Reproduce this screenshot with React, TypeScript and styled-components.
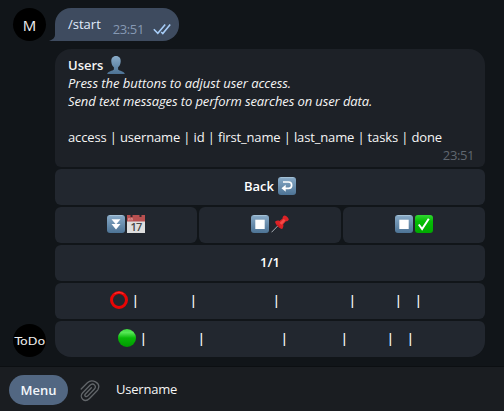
import React from "react";
import styled, { createGlobalStyle } from "styled-components";

const Global = createGlobalStyle`
  * { box-sizing: border-box; }
  body { margin: 0; background: #101417; overflow: hidden; }
`;

const Page = styled.div`
  width: 504px;
  height: 411px;
  display: flex;
  flex-direction: column;
  background: #111519;
  color: #f5f5f5;
  font: 13px/18px "Open Sans", "Noto Sans", sans-serif;
`;

const Chat = styled.main`
  height: 366px;
  padding: 8px 19px 9px 13px;
  display: flex;
  flex-direction: column;
  gap: 8px;
`;

const MessageRow = styled.div`
  display: flex;
  align-items: flex-end;
`;

const Avatar = styled.div`
  width: 33px;
  height: 33px;
  flex: none;
  display: flex;
  align-items: center;
  justify-content: center;
  border-radius: 50%;
  background: #000;
  color: #eee;
  font-size: 15px;
  font-weight: 500;
`;

const Brand = styled.span`
  font: 400 10.5px/18px "DejaVu Sans", sans-serif;
  white-space: nowrap;
  transform: scaleX(1.2);
`;

const Tail = styled.svg`
  width: 10px;
  height: 12px;
  flex: none;
  margin: 0 -7px 0 3px;
`;

const Sent = styled.div`
  width: 124px;
  height: 33px;
  display: flex;
  align-items: flex-start;
  padding: 7px 8px 0 13px;
  margin-left: 3px;
  border-radius: 16px 16px 16px 0;
  background: #3e4b5f;
  color: #e1edfd;
`;

const SentTime = styled.span`
  margin: 5px 0 0 12px;
  width: 31px;
  letter-spacing: -0.4px;
  color: #8699b3;
`;

const Ticks = styled.svg`
  width: 18px;
  height: 12px;
  margin: 8px 0 0 9px;
`;

const Message = styled.section`
  width: 430px;
  margin-left: 9px;
  display: flex;
  flex-direction: column;
  gap: 2px;
`;

const Card = styled.div`
  height: 118px;
  padding: 7px 11px 0 13px;
  border-radius: 16px 16px 6px 6px;
  background: #1d2127;
`;

const Line = styled.div<{ $italic?: boolean; $tracking?: number }>`
  height: 18px;
  display: flex;
  align-items: center;
  white-space: pre;
  font-style: ${(p) => (p.$italic ? "italic" : "normal")};
  letter-spacing: ${(p) => p.$tracking ?? 0}px;
`;

const Strong = styled.strong`
  font-weight: 600;
`;

const CardTime = styled.div`
  text-align: right;
  letter-spacing: -0.4px;
  color: #60676f;
`;

const ButtonRow = styled.div`
  display: grid;
  grid-auto-flow: column;
  grid-auto-columns: 1fr;
  gap: 2px;
`;

const Key = styled.button<{ $last?: boolean; $inset?: number }>`
  height: 36px;
  border: 0;
  padding: 0 0 2px ${(p) => p.$inset ?? 0}px;
  display: flex;
  align-items: center;
  justify-content: ${(p) => (p.$inset ? "flex-start" : "center")};
  border-radius: ${(p) => (p.$last ? "6px 6px 16px 16px" : "6px")};
  background: #22272f;
  color: #fff;
  font: 600 13px/18px "Open Sans", sans-serif;
`;

const Bar = styled.span<{ $w: number }>`
  width: ${(p) => p.$w}px;
  text-align: right;
  font-weight: 600;
`;

const Emoji = styled.svg<{ $gap?: number }>`
  width: 18px;
  height: 18px;
  flex: none;
  margin-left: ${(p) => p.$gap ?? 0}px;
`;

const Footer = styled.footer`
  height: 45px;
  display: flex;
  align-items: center;
  padding: 2px 9px 0;
  border-top: 1px solid #0c0f12;
  background: #1a1d21;
`;

const MenuButton = styled.button`
  width: 59px;
  height: 30px;
  border: 0;
  padding: 0;
  border-radius: 15px;
  background: #526782;
  color: #f4f7fb;
  font: 600 13px/18px "Open Sans", sans-serif;
`;

const Clip = styled.svg`
  width: 20px;
  height: 22px;
  margin: 1px 0 0 12px;
`;

const Draft = styled.span`
  margin: -2px 0 0 16px;
  letter-spacing: -0.2px;
`;

const Gradients = () => (
  <defs>
    <linearGradient id="blue" x2="0" y2="1">
      <stop stopColor="#89abc8" />
      <stop offset="1" stopColor="#4d7395" />
    </linearGradient>
    <linearGradient id="green" x2="0" y2="1">
      <stop stopColor="#32d832" />
      <stop offset=".35" stopColor="#05bd05" />
      <stop offset="1" stopColor="#00a900" />
    </linearGradient>
    <linearGradient id="ball" x2="0" y2="1">
      <stop stopColor="#3fdc3f" />
      <stop offset=".2" stopColor="#55e855" />
      <stop offset=".5" stopColor="#08b808" />
      <stop offset="1" stopColor="#009a00" />
    </linearGradient>
  </defs>
);

const BlueTile = ({ children, gap }: { children: React.ReactNode; gap?: number }) => (
  <Emoji viewBox="0 0 18 18" $gap={gap}>
    <Gradients />
    <rect width="18" height="18" rx="3" fill="url(#blue)" />
    <path d="M2.5.6h13" stroke="#b0c9dc" strokeWidth=".8" />
    {children}
  </Emoji>
);

const Person = () => (
  <Emoji viewBox="0 0 18 18" $gap={4}>
    <Gradients />
    <path
      d="M9 0C5.8 0 4.1 2.3 4.3 5.5c.1 2.7 1.1 4.6 2.6 5.7v2.3C5.8 15 .7 15 .2 18h17.6c-.5-3-5.6-3-6.7-4.5v-2.3c1.5-1.1 2.5-3 2.6-5.7C13.9 2.3 12.2 0 9 0z"
      fill="url(#blue)"
    />
  </Emoji>
);

const StopTile = () => (
  <BlueTile>
    <rect x="4.3" y="4.7" width="9.4" height="9.3" fill="#fff" />
  </BlueTile>
);

const Calendar = () => (
  <Emoji viewBox="0 0 18 18" $gap={2}>
    <path d="M0 0h18v18H0z" fill="#dedede" />
    <path d="M0 0h18v6.5H0z" fill="#b85050" />
    <path d="M3.5 0h2v2h-2zM12.5 0h2v2h-2z" fill="#33272c" />
    <path d="M1.5 5.5V3.4h1.3v2M4 5.5V3.4h1.3v2" stroke="#d7908f" fill="none" />
    <text x="9" y="16" textAnchor="middle" fontFamily="Open Sans" fontSize="11" fontWeight="600" letterSpacing="-.8" fill="#484848">17</text>
  </Emoji>
);

const Pin = () => (
  <Emoji viewBox="0 0 18 18" $gap={2}>
    <path d="M.5 17.3 7 10.7" stroke="#a7adb4" strokeWidth="1" />
    <path d="M4 6.7c1.5-1.2 3.2-1.3 4.5-.8l3.1-2.5C11.4 1.7 12.4.6 13.7.4c2.1.6 3.5 2 4.1 4-.4 1.3-1.5 2-2.9 1.8L12.2 9.3c.5 1.7.1 3.3-1 4.7C8 13.2 5 10.3 4 6.7z" fill="#dd2226" />
    <path d="m8.5 8 4.2-4.1 1.8 1.5-3.7 4.4z" fill="#f44b47" />
    <path d="m6 9.5 2.5 2.7" stroke="#a8141c" />
  </Emoji>
);

const Check = () => (
  <Emoji viewBox="0 0 18 18" $gap={2}>
    <Gradients />
    <rect width="18" height="18" rx="3" fill="url(#green)" />
    <path d="m3.8 9.5 3.3 4.5 6.7-10.3" fill="none" stroke="#fff" strokeWidth="2" />
  </Emoji>
);

const RedRing = () => (
  <Emoji viewBox="0 0 18 18">
    <circle cx="9" cy="9" r="7.5" fill="none" stroke="#e80505" strokeWidth="3" />
    <path d="M4.5 2.8a8 8 0 0 1 9 0" fill="none" stroke="#fa2e2e" strokeWidth="1.2" />
  </Emoji>
);

const GreenDot = () => (
  <Emoji viewBox="0 0 18 18">
    <Gradients />
    <circle cx="9" cy="9" r="9" fill="url(#ball)" />
  </Emoji>
);

const users = [
  { icon: <RedRing />, inset: 55, bars: [11, 58, 83, 76, 46, 20] },
  { icon: <GreenDot />, inset: 63, bars: [11, 58, 83, 60, 46, 20] },
];

export default function App() {
  return (
    <Page>
      <Global />
      <Chat>
        <MessageRow>
          <Avatar>M</Avatar>
          <Tail viewBox="0 0 10 12">
            <path d="M6 0v6c0 2.5-2 4.5-6 6h10V0z" fill="#3e4b5f" />
          </Tail>
          <Sent>
            /start
            <SentTime>23:51</SentTime>
            <Ticks viewBox="0 0 18 12" fill="none" stroke="#a7cdf8" strokeWidth="1.6">
              <path d="m.8 6.2 4 4L12.2 1.5M8.2 9l1.6 1.5 7.4-9" />
            </Ticks>
          </Sent>
        </MessageRow>
        <MessageRow>
          <Avatar><Brand>ToDo</Brand></Avatar>
          <Message>
            <Card>
              <Line><Strong>Users</Strong><Person /></Line>
              <Line $italic $tracking={-0.04}>Press the buttons to adjust user access.</Line>
              <Line $italic $tracking={-0.1}>Send text messages to perform searches on user data.</Line>
              <Line />
              <Line $tracking={-0.147}>access | username | id | first_name | last_name | tasks | done</Line>
              <CardTime>23:51</CardTime>
            </Card>
            <ButtonRow>
              <Key>
                Back
                <BlueTile gap={4}>
                  <path d="M5 5h5.5a2.8 2.8 0 0 1 0 6.3H6" fill="none" stroke="#fff" strokeWidth="1.7" />
                  <path d="m3.5 11.3 4.2-3.5v7z" fill="#fff" />
                </BlueTile>
              </Key>
            </ButtonRow>
            <ButtonRow>
              <Key>
                <BlueTile>
                  <path d="M4.5 4.2h9L9 9.5zM4.5 9h9L9 14.5z" fill="#fff" />
                </BlueTile>
                <Calendar />
              </Key>
              <Key><StopTile /><Pin /></Key>
              <Key><StopTile /><Check /></Key>
            </ButtonRow>
            <ButtonRow><Key>1/1</Key></ButtonRow>
            {users.map((user, row) => (
              <ButtonRow key={row}>
                <Key $inset={user.inset} $last={row === users.length - 1}>
                  {user.icon}
                  {user.bars.map((w, i) => <Bar key={i} $w={w}>|</Bar>)}
                </Key>
              </ButtonRow>
            ))}
          </Message>
        </MessageRow>
      </Chat>
      <Footer>
        <MenuButton>Menu</MenuButton>
        <Clip viewBox="0 0 20 22" fill="none" stroke="#62666a" strokeWidth="1.3" strokeLinecap="round">
          <path d="m1.2 9 6.2-6.2c4.2-4 13.8-.7 10.7 6.4-.5 1-1 1.5-1.8 2.3l-6.8 7c-5 5-11-1.2-6.8-5.8l7.3-7.4c3.2-3.2 7.2.8 4.2 4l-6.6 6.8c-1.7 1.5-3.7-.5-2.2-2.1l6-6.2" />
        </Clip>
        <Draft>Username</Draft>
      </Footer>
    </Page>
  );
}
